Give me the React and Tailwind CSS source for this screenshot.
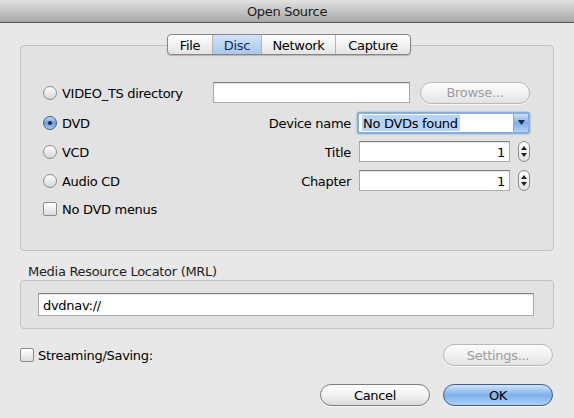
import { useState } from 'react';

const TABS = ['File', 'Disc', 'Network', 'Capture'];
const TAB_WIDTHS = { File: 'w-[44px]', Disc: 'w-[49px]', Network: 'w-[74px]', Capture: 'w-[75px]' };

// Aqua-style radio button
function Radio({ checked }) {
  return (
    <span
      className={`relative flex h-[14px] w-[14px] shrink-0 items-center justify-center rounded-full border ${
        checked
          ? 'border-[#3f5f8f] bg-gradient-to-b from-[#c9dcf5] via-[#6e9bd8] to-[#a9cbf3]'
          : 'border-[#8c8c8c] bg-gradient-to-b from-[#ffffff] to-[#d6d6d6]'
      }`}
    >
      {checked && <span className="h-[4px] w-[4px] rounded-full bg-[#1b2a40]" />}
    </span>
  );
}

function Checkbox() {
  return (
    <span className="h-[14px] w-[14px] shrink-0 rounded-[2px] border border-[#8c8c8c] bg-gradient-to-b from-[#ffffff] to-[#dcdcdc]" />
  );
}

function PillButton({ children, width = 'w-[110px]', disabled, primary }) {
  let tone = 'border-[#7d7d7d] from-[#ffffff] via-[#f2f2f2] to-[#dadada] text-black';
  if (disabled) tone = 'border-[#b9b9b9] from-[#fbfbfb] via-[#f1f1f1] to-[#e3e3e3] text-[#9c9c9c]';
  if (primary) tone = 'border-[#3d5d8c] from-[#d2e4f8] via-[#7fb0ea] to-[#a9d0f7] text-black';
  return (
    <div
      className={`flex h-[22px] ${width} items-center justify-center rounded-full border bg-gradient-to-b ${tone} shadow-[0_1px_0_rgba(255,255,255,0.7)]`}
    >
      {children}
    </div>
  );
}

function Stepper() {
  return (
    <div className="flex h-[21px] w-[12px] flex-col items-center justify-center gap-[3px] rounded-full border border-[#8c8c8c] bg-gradient-to-b from-[#ffffff] to-[#e2e2e2]">
      <svg width="6" height="4" viewBox="0 0 6 4"><path d="M3 0 L6 4 L0 4 Z" fill="#222" /></svg>
      <svg width="6" height="4" viewBox="0 0 6 4"><path d="M0 0 L6 0 L3 4 Z" fill="#222" /></svg>
    </div>
  );
}

function TextField({ width, value, align = 'left', height = 'h-[21px]' }) {
  return (
    <div
      className={`flex ${height} ${width} items-center border border-[#a9a9a9] border-t-[#7f7f7f] bg-white px-[4px] pt-[1px] shadow-[inset_0_1px_1px_rgba(0,0,0,0.12)] ${
        align === 'right' ? 'justify-end' : ''
      }`}
    >
      {value}
    </div>
  );
}

export default function App() {
  const [tab, setTab] = useState('Disc');

  return (
    <div className="h-[418px] w-[574px] overflow-hidden bg-[#e8e8e8] text-[13px] leading-none tracking-[-0.3px] text-black [font-family:'DejaVu_Sans',sans-serif]">
      {/* Window title bar */}
      <div className="flex h-[23px] items-center justify-center border-b border-[#555555] bg-gradient-to-b from-[#e2e2e2] to-[#a7a7a7] pt-[1px] text-[#1a1a1a]">
        Open Source
      </div>

      <div className="px-[20px]">
        {/* Segmented tab control */}
        <div className="relative z-10 mt-[11px] flex justify-center pl-[4px]">
          <div className="flex h-[21px] overflow-hidden rounded-[4px] border border-[#858585] bg-gradient-to-b from-[#ffffff] to-[#e4e4e4] shadow-[0_1px_1px_rgba(0,0,0,0.2)]">
            {TABS.map((t, i) => (
              <button
                key={t}
                onClick={() => setTab(t)}
                className={`flex h-full ${TAB_WIDTHS[t]} items-center justify-center pt-[1px] ${
                  i > 0 ? 'border-l border-[#b5b5b5]' : ''
                } ${tab === t ? 'bg-gradient-to-b from-[#d3e3f7] to-[#a9c7ee] text-[#0d2a55]' : ''}`}
              >
                {t}
              </button>
            ))}
          </div>
        </div>

        {/* Disc options box */}
        <div className="-mt-[10px] h-[206px] rounded-[4px] border border-[#c3c3c3] bg-[#e2e2e2] pl-[22px] pt-[36px]">
          <div className="flex h-[21px] items-center">
            <div className="flex w-[170px] items-center gap-[5px]">
              <Radio />
              <span className="pt-[1px]">VIDEO_TS directory</span>
            </div>
            <TextField width="w-[197px]" />
            <div className="ml-[10px]">
              <PillButton disabled>Browse...</PillButton>
            </div>
          </div>

          <div className="mt-[9px] flex h-[21px] items-center">
            <div className="flex w-[170px] items-center gap-[5px]">
              <Radio checked />
              <span className="pt-[1px]">DVD</span>
            </div>
            <span className="w-[138px] pt-[1px] text-right">Device name</span>
            <div className="ml-[6px] flex h-[22px] w-[173px] items-center rounded-[3px] border-2 border-[#86aedc] bg-white shadow-[0_0_2px_#6d9bd6]">
              <div className="flex h-full flex-1 items-center pl-[3px]">
                <span className="flex h-[16px] items-center bg-[#b7d3f6] px-[1px] pr-[2px] pt-[1px]">No DVDs found</span>
              </div>
              <div className="flex h-full w-[15px] items-center justify-center border-l border-[#8aa9d4] bg-gradient-to-b from-[#cfe1f7] via-[#7eaee8] to-[#b3d3f6]">
                <svg width="7" height="5" viewBox="0 0 7 5"><path d="M0 0 L7 0 L3.5 5 Z" fill="#1d2b44" /></svg>
              </div>
            </div>
          </div>

          <div className="mt-[8px] flex h-[21px] items-center">
            <div className="flex w-[170px] items-center gap-[5px]">
              <Radio />
              <span className="pt-[2px]">VCD</span>
            </div>
            <span className="w-[138px] pt-[2px] text-right">Title</span>
            <div className="ml-[8px]">
              <TextField width="w-[151px]" value="1" align="right" />
            </div>
            <div className="ml-[8px]">
              <Stepper />
            </div>
          </div>

          <div className="mt-[8px] flex h-[21px] items-center">
            <div className="flex w-[170px] items-center gap-[5px]">
              <Radio />
              <span className="pt-[2px]">Audio CD</span>
            </div>
            <span className="w-[138px] pt-[2px] text-right">Chapter</span>
            <div className="ml-[8px]">
              <TextField width="w-[151px]" value="1" align="right" />
            </div>
            <div className="ml-[8px]">
              <Stepper />
            </div>
          </div>

          <div className="mt-[7px] flex h-[21px] items-center gap-[5px]">
            <Checkbox />
            <span className="pt-[1px]">No DVD menus</span>
          </div>
        </div>

        {/* MRL */}
        <div className="mt-[12px] flex h-[16px] items-center pl-[8px] pt-[1px] text-[#1e1e1e]">Media Resource Locator (MRL)</div>
        <div className="mt-[1px] h-[49px] rounded-[4px] border border-[#c3c3c3] bg-[#e2e2e2] pl-[17px] pt-[12px]">
          <TextField width="w-[496px]" height="h-[23px]" value="dvdnav://" />
        </div>

        {/* Streaming */}
        <div className="mt-[15px] flex h-[22px] items-center">
          <Checkbox />
          <span className="ml-[4px] pt-[1px]">Streaming/Saving:</span>
          <div className="ml-auto mr-[1px]">
            <PillButton disabled>Settings...</PillButton>
          </div>
        </div>

        {/* Dialog buttons */}
        <div className="mt-[18px] flex items-center justify-end gap-[13px] pr-[1px]">
          <PillButton>Cancel</PillButton>
          <PillButton primary>OK</PillButton>
        </div>
      </div>
    </div>
  );
}
